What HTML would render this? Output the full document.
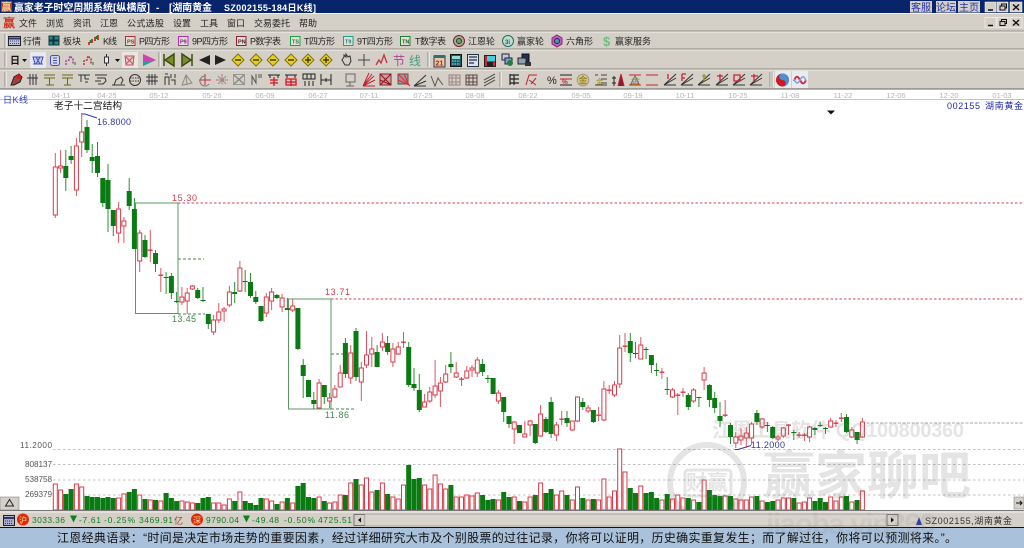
<!DOCTYPE html>
<html><head><meta charset="utf-8"><style>
html,body{margin:0;padding:0;width:1024px;height:548px;overflow:hidden;background:#fff}
svg{display:block;position:absolute;left:0;top:0}
text{font-family:"Liberation Sans","Noto Sans CJK SC",sans-serif}
.u text,.u{font-size:9px;fill:#222}
.ic{fill:none;stroke:#333;stroke-width:1}
</style></head><body>
<svg id="s" width="1024" height="548" viewBox="0 0 1024 548" xmlns="http://www.w3.org/2000/svg" style="filter:blur(.3px)">
<!-- chrome -->
<rect width="1024" height="13.5" fill="#08246b"/>
<rect y="13.5" width="1024" height="76" fill="#d4d0c8"/>
<path d="M0 13.5H1024M0 32H1024M0 50H1024M0 70H1024" stroke="#f4f2ec" stroke-width="1"/>
<path d="M0 31H1024M0 49H1024M0 69H1024" stroke="#8e8b84" stroke-width="1"/>
<path d="M0 89H1024" stroke="#666" stroke-width="1"/>
<path d="M0 99.5H1024" stroke="#c4c4c4" stroke-width="1"/>
<path d="M5 34V48M5 52V67M5 72V87" stroke="#8e8b84" stroke-width="1"/>
<path d="M6 34V48M6 52V67M6 72V87" stroke="#fff" stroke-width="1"/>
<path d="M428 52V67M500 72V87M770 72V87M772 72V87M159 52V67" stroke="#8e8b84"/>
<path d="M429 52V67M501 72V87M771 72V87M773 72V87M160 52V67" stroke="#fff"/>

<!-- title -->
<rect x="1" y="1" width="11" height="11" fill="#c83020"/><text x="1.5" y="10.5" font-size="10" fill="#f4e0a0" font-weight="700">赢</text>
<g fill="#fff" font-weight="700" font-size="10">
<text x="14" y="11" textLength="99">赢家老子时空周期系统</text>
<text x="113" y="11" textLength="37">[纵横版]</text>
<text x="156" y="11">-</text>
<text x="169" y="11" textLength="43">[湖南黄金</text>
<text x="224" y="11" textLength="92" font-size="9">SZ002155-184日K线]</text>
</g>
<g fill="#d4d0c8"><rect x="910" y="1" width="22" height="11.500"/><rect x="936" y="1" width="20" height="11.500"/><rect x="958" y="1" width="22" height="11.500"/></g>
<g fill="#2030b0" font-size="10"><text x="911" y="11">客服</text><text x="936" y="11">论坛</text><text x="959" y="11">主页</text></g>
<g fill="#d4d0c8" stroke="#fff" stroke-width=".5"><rect x="985" y="2" width="11" height="10"/><rect x="997" y="2" width="11" height="10"/><rect x="1010" y="2" width="12" height="10"/><rect x="985" y="17.500" width="11" height="10"/><rect x="997" y="17.500" width="11" height="10"/><rect x="1010" y="17.500" width="12" height="10"/></g>
<path d="M988 10H993M1013 4.500L1019 10M1019 4.500L1013 10M988 25.500H993M1013 20L1019 25.500M1019 20L1013 25.500" stroke="#111" stroke-width="1.400"/>
<path d="M1000 6h5v4h-5zM1001.500 6V4h5v4h-1.500M1000 21.500h5v4h-5zM1001.500 21.500v-2h5v4h-1.500" fill="none" stroke="#111"/>

<!-- menu -->
<rect x="3" y="16" width="12" height="13" fill="#d4d0c8"/><text x="3" y="27" font-size="12" fill="#d02818" font-weight="700">赢</text>
<g class="u" font-size="9" fill="#222">
<text x="19" y="26.500" textLength="18">文件</text><text x="46" y="26.500" textLength="18">浏览</text><text x="73" y="26.500" textLength="18">资讯</text><text x="100" y="26.500" textLength="18">江恩</text><text x="127" y="26.500" textLength="37">公式选股</text><text x="173" y="26.500" textLength="18">设置</text><text x="200" y="26.500" textLength="18">工具</text><text x="227" y="26.500" textLength="18">窗口</text><text x="254" y="26.500" textLength="36">交易委托</text><text x="299" y="26.500" textLength="18">帮助</text>
</g>
<!-- toolbar 1 -->
<g class="u">
<text x="23" y="44.500" textLength="18">行情</text><text x="63" y="44.500" textLength="18">板块</text><text x="103" y="44.500" textLength="14">K线</text>
<text x="139" y="44.500" textLength="31" font-size="8.500">P四方形</text><text x="192" y="44.500" textLength="36" font-size="8.500">9P四方形</text><text x="250" y="44.500" textLength="31" font-size="8.500">P数字表</text><text x="304" y="44.500" textLength="31" font-size="8.500">T四方形</text><text x="357" y="44.500" textLength="36" font-size="8.500">9T四方形</text><text x="415" y="44.500" textLength="31" font-size="8.500">T数字表</text>
<text x="468" y="44.500" textLength="27">江恩轮</text><text x="517" y="44.500" textLength="27">赢家轮</text><text x="566" y="44.500" textLength="27">六角形</text><text x="615" y="44.500" textLength="36">赢家服务</text>
</g>
<rect x="8.500" y="36.500" width="12" height="9" fill="#bcc4dc" stroke="#223"/><path d="M9 38.500H20" stroke="#336" stroke-width="2"/><path d="M10 41H19M10 43.500H19" stroke="#446" stroke-dasharray="1 1"/>
<path d="M49 36h4v4h-4zM54 36h5v4h-5zM49 41h4v4h-4zM54 41h5v4h-5z" fill="#2a8a78" stroke="#134"/>
<path d="M89 45V42M92 43V39M95 41V37M98 40V35" stroke="#c01010" stroke-width="1.500"/><path d="M90.500 43V40M96.500 39V36" stroke="#108010" stroke-width="1.500"/>
<g fill="#e4e0d8" stroke-width="1"><rect x="125.500" y="36.500" width="9.500" height="9" stroke="#b03030"/><rect x="178.500" y="36.500" width="9.500" height="9" stroke="#b030b0"/><rect x="236.500" y="36.500" width="9.500" height="9" stroke="#902030"/><rect x="290.500" y="36.500" width="9.500" height="9" stroke="#20a040"/><rect x="343.500" y="36.500" width="9.500" height="9" stroke="#20a090"/><rect x="400.500" y="36.500" width="9.500" height="9" stroke="#208030"/></g>
<g font-size="5.500" font-weight="700"><text x="127" y="43.500" fill="#803030">PS</text><text x="180" y="43.500" fill="#802080">P9</text><text x="238" y="43.500" fill="#502030">PN</text><text x="292" y="43.500" fill="#208040">TS</text><text x="345" y="43.500" fill="#208070">T9</text><text x="402" y="43.500" fill="#206030">TN</text></g>
<circle cx="459" cy="41" r="5.500" fill="#a0b090" stroke="#802030" stroke-width="1"/><circle cx="459" cy="41" r="2.500" fill="#70a070" stroke="#333"/>
<circle cx="508" cy="41" r="5.500" fill="#c0dcd0" stroke="#207060"/><text x="505" y="44" font-size="6" fill="#206050" font-weight="700">3i</text>
<path d="M557 35l5 3v6l-5 3-5-3v-6z" fill="#b060c0" stroke="#a02060"/><circle cx="557" cy="41" r="2.500" fill="#40a0a0" stroke="#226"/>
<text x="603" y="46" font-size="13" fill="#6cc080" font-weight="700">$</text>

<!-- toolbar 2 -->
<text x="10" y="64" font-size="10" font-weight="700" fill="#111">日</text><path d="M22 59h5l-2.500 3z" fill="#111"/>
<rect x="30" y="52" width="16" height="16" fill="#e8e8f0"/><rect x="122" y="52" width="16" height="16" fill="#e8e6e0"/>
<path d="M33 57h10l-2 7h-6zM33 64h10M36 57l4 7M40 57l-4 7" fill="#c0c8f0" stroke="#4050b8"/>
<rect x="50.500" y="55.500" width="9" height="10" rx="2" fill="#d8d8f0" stroke="#4050b8"/><path d="M53 58h4M53 60.500h4M53 63h4" stroke="#4050b8"/>
<path d="M66 65v-4l3-1 1-4 3 3v5" fill="none" stroke="#b040a0" stroke-width="1.500" stroke-dasharray="2 1"/><path d="M75 62v3" stroke="#208020"/>
<path d="M84 65v-4l3-1 1-4 3 3v5" fill="none" stroke="#c03040" stroke-width="1.500" stroke-dasharray="2 1"/><path d="M93 62v3" stroke="#208020"/>
<path d="M106.500 54v12" stroke="#333"/><rect x="104.500" y="57" width="4" height="6" fill="#eee" stroke="#333"/><path d="M115 59h5l-2.500 3z" fill="#111"/>
<path d="M125 56h9l-1 9h-7zM126 57l7 7M133 57l-7 7" fill="#f0c8c8" stroke="#c05060"/>
<path d="M143 54l13 6-13 6z" fill="#d040b0"/><path d="M143 61h10l3-1-13 6z" fill="#20a0a0"/>
<path d="M164 54v12M174 54l-9 6 9 6z" fill="#7c8c28" stroke="#3c4c10" stroke-width="1.500"/>
<path d="M192 54v12M182 54l9 6-9 6z" fill="#7c8c28" stroke="#3c4c10" stroke-width="1.500"/>
<path d="M199 60l11-5v10z" fill="#222"/><path d="M215 55l11 5-11 5z" fill="#222"/>
<g fill="#e8d020" stroke="#807010"><path d="M238 54l6 6-6 6-6-6z"/><path d="M256 54l6 6-6 6-6-6z"/><path d="M273 54l6 6-6 6-6-6z"/><path d="M291 54l6 6-6 6-6-6z"/><path d="M308 54l6 6-6 6-6-6z"/><path d="M326 54l6 6-6 6-6-6z"/></g>
<path d="M235 60h6M253 60h6M270 60h6M288 60h6M305 60h6M323 60h6M308 57v6M326 57v6" stroke="#222" stroke-width="1.200"/>
<path d="M342 60l2-3v-2l2 2v-3l2 3 2-1 1 5-2 4h-4z" class="ic"/>
<path d="M364 54v12M358 60h12" stroke="#444"/>
<path d="M376 65l3-5 2 3 3-8 3 8" fill="none" stroke="#c03040" stroke-width="1.300"/>
<text x="393" y="65" font-size="12" fill="#b040a0">节</text><text x="409" y="65" font-size="12" fill="#40a080">线</text>
<rect x="434" y="56" width="11" height="11" fill="#e8c8a0" stroke="#335"/><rect x="434" y="55" width="11" height="3" fill="#307070"/><text x="435.500" y="65.500" font-size="7" fill="#c02020" font-weight="700">21</text>
<rect x="450.500" y="54.500" width="11" height="12" fill="#106070" stroke="#111"/><rect x="452" y="56" width="8" height="3" fill="#90e0d0"/><path d="M452 61h8M452 64h8" stroke="#ccd" stroke-dasharray="1.500 1"/>
<rect x="467.500" y="54.500" width="11" height="12" fill="#dde" stroke="#234"/><path d="M469 57h8M469 60h8M469 63h5" stroke="#234" stroke-width="1.200"/>
<rect x="484.500" y="55.500" width="11" height="11" fill="#e02030" stroke="#222"/><rect x="487" y="56" width="8" height="5" fill="#40d0e0"/><rect x="487" y="62" width="6" height="4" fill="#222"/>
<rect x="502" y="54" width="7" height="6" fill="#c0c8e8" stroke="#223"/><rect x="505" y="58" width="7" height="6" fill="#80a0d0" stroke="#223"/><circle cx="510" cy="63" r="3" fill="#208040"/>
<rect x="522" y="54" width="7" height="8" fill="#203060" stroke="#111"/><rect x="518" y="58" width="8" height="6" fill="#90a0b0" stroke="#222"/><rect x="525" y="62" width="6" height="4" fill="#333"/>

<!-- toolbar 3 -->
<path d="M11 85l3-8 5-3 3 3-2 5-6 3z" fill="#a04040" stroke="#222"/><circle cx="19" cy="76.500" r="2.300" fill="#e01010"/>
<g fill="none" stroke="#333" stroke-width="1">
<path d="M30 74v11M33 74v11M27 78h11M36 74v11"/>
<path d="M146 77h12M149 74v11M152 74v11M155 74v11M146 81h12"/>
<path d="M44 75h11M44 78h11M49.500 78v7M46 85h8" stroke="#6a6a10"/><path d="M62 75h11M62 78h11M67.500 78v7M64 85h7" stroke="#6a6a10"/>
<path d="M78 75h12M81 75v7M85 75v4M85 79h4M85 82h3"/>
<path d="M95 75h12M97 78h8l1 3-3 3h-5M95 81h6"/>
<path d="M112 85h13M114 85l2-5 5-3 2 3-2 4"/>
<circle cx="135" cy="80" r="5.500"/><path d="M130 78h10M130 81h10" stroke-dasharray="1.500 1"/>
<path d="M165 85v-8h4v8M171 74v4M175 74v4M171 80h4v5M165 74h3"/>
<path d="M182 85l4-10 6 8-9 2zM186 75l1 10" stroke="#888"/>
<path d="M205 74v11M199 80h12" stroke="#c03040"/><path d="M205 76a5 5 0 1 0 4 8" stroke="#777"/>
<path d="M222 74v11M216 80h12" stroke="#c05060" stroke-dasharray="1.500 .7"/><path d="M218 76l8 8M226 76l-8 8" stroke="#909090"/>
<rect x="233.500" y="74.500" width="11" height="10" stroke="#999"/><path d="M234 75l10 9M244 75l-10 9" stroke="#888" stroke-width="1.500"/>
<path d="M252 85v-9l4 7v-9M259 74v4M261 74v4" stroke="#555"/>
<path d="M268 75h12M270 75v3M278 75v3" stroke="#222"/><path d="M274 77v9M270 80h8M270 83h8" stroke="#e01020" stroke-width="1.300"/>
<path d="M285 75h12M287 75v3M295 75v3" stroke="#222"/><path d="M286 79h10v6h-10zM291 79v7M286 82h10" stroke="#e01020" stroke-width="1.300"/>
<path d="M303 74h12v5h-12zM307 74v5M311 74v5M305 81v5M309 81v5M313 81v5" stroke="#222"/>
<path d="M321 74v11M331 74v11M321 80h10M326 78v4" stroke="#222"/>
<path d="M346 74h9v8h-9zM350 82v4M346 86h8" stroke="#666"/>
<path d="M363 86l11-10M363 86l9-12M363 86l6-13M363 86l12-6M363 86h12" stroke="#c02030"/>
<rect x="380" y="74" width="11" height="11" fill="#c8a0a0" stroke="#902030"/><path d="M380 85l11-11M380 74l11 11M380 80l11 5" stroke="#901020"/>
<rect x="398" y="74" width="10" height="10" fill="#b09090" stroke="#555"/><path d="M398 74l12 12M398 80l11 5M404 74l5 11" stroke="#d03040"/>
<path d="M414 86l12-11M414 86l12-5M414 86h12" stroke="#333"/>
<path d="M431 76l4 10 3-8 2 3 3 4" stroke="#555"/>
<path d="M449 75h11v10h-11zM452 75v10M456 75v10M449 78h11M449 82h11" stroke="#a08080"/>
<path d="M466 75h11v10h-11zM469 75v10M473 75v10M466 78h11M466 82h11" stroke="#604040"/>
<path d="M484 80l11-6M484 83l11-6M484 86l11-6" stroke="#555"/>
<path d="M510 74v11M510 75h9M510 79h9M510 83h9M514 75v10" stroke="#222" stroke-width="1.200"/>
<path d="M526 85l3-10h8M529 80l7 5M536 78l-5 6" stroke="#c02030"/>
<path d="M560 75h12M560 85h12" stroke="#222"/><path d="M560 79h12" stroke="#d02030"/>
<circle cx="583" cy="80" r="5.800" fill="#d8c888" stroke="#998"/>
<path d="M595 75h3M601 75h6M601 79h6M601 83h6M595 85h12" stroke="#444"/>
<path d="M614 76v10M612 78h4M612 83h4" stroke="#222"/><path d="M618 86l3-12 3 12" fill="#802030" stroke="#c02030"/>
<path d="M629 75h12M629 85h12" stroke="#d02030"/><path d="M635 76l-4 8h8z" stroke="#666"/>
<path d="M646 75h12M646 85h12" stroke="#d02030"/>
<path d="M664 85h12M664 85l12-7M664 85l12-11" stroke="#333"/><path d="M668 74v5" stroke="#d02030" stroke-width="1.300"/>
<path d="M681 85h12M681 85l12-7M681 85l12-11" stroke="#333"/><path d="M682 74h4M682 74v7M682 78h3" stroke="#d02030" stroke-width="1.300"/>
<path d="M698 85h12M698 85l12-7M698 85l12-11" stroke="#333"/><path d="M702 76h4M704 74v7" stroke="#a09020" stroke-width="1.300"/>
<path d="M716 85h12M716 85l12-7M716 85l12-11" stroke="#333"/><path d="M717 76h6M720 74v8" stroke="#d02030" stroke-width="1.300"/>
<path d="M733 85h12M733 85l12-7M733 85l12-11" stroke="#333"/><path d="M734 75h6v6h-6z" stroke="#d02030" stroke-width="1.300"/>
<path d="M750 85h12M750 85l12-7M750 85l12-11" stroke="#333"/><path d="M751 76h7M754 74v7" stroke="#d02030" stroke-width="1.300"/>
</g>
<text x="547" y="84" font-size="11" fill="#222">%</text><text x="562" y="84" font-size="6.500" fill="#d02030" font-weight="700">%</text>
<text x="578.500" y="83.500" font-size="9" fill="#807010">金</text><text x="596" y="84" font-size="7" fill="#a09020">金</text>
<text x="631" y="84" font-size="9" fill="#a09020">金</text>
<rect x="775" y="71" width="16" height="17" fill="#e8ecf0"/><rect x="792" y="71" width="16" height="17" fill="#e8ecf0"/>
<circle cx="782.500" cy="80" r="6.500" fill="#d01820"/><path d="M782.500 73.500a6.500 6.500 0 0 1 0 13a3.200 3.200 0 0 0 0-6.500a3.200 3.200 0 0 1 0-6.500" fill="#5090d0"/>
<path d="M794 81c2-6 4-5 6-1s4 5 6 0" fill="none" stroke="#d03040" stroke-width="2"/><path d="M794 79c2 5 4 5 6 1s4-5 6 1" fill="none" stroke="#80a0d8" stroke-width="1.500"/>

<!-- date axis -->
<g font-size="7.500" fill="#b4b4b4" text-anchor="middle"><text x="61" y="98">04-11</text><text x="107" y="98">04-25</text><text x="159" y="98">05-12</text><text x="212" y="98">05-26</text><text x="265" y="98">06-09</text><text x="318" y="98">06-27</text><text x="369" y="98">07-11</text><text x="423" y="98">07-25</text><text x="475" y="98">08-08</text><text x="528" y="98">08-22</text><text x="581" y="98">09-05</text><text x="633" y="98">09-19</text><text x="685" y="98">10-11</text><text x="738" y="98">10-25</text><text x="790" y="98">11-08</text><text x="843" y="98">11-22</text><text x="896" y="98">12-06</text><text x="949" y="98">12-20</text><text x="1002" y="98">01-03</text></g>
<text x="3" y="103" font-size="9" fill="#3040c0" textLength="25">日K线</text>
<text x="54" y="109" font-size="9.700" fill="#222" textLength="68">老子十二宫结构</text>
<text x="947" y="109" font-size="9" fill="#2028a8" textLength="33">002155</text><text x="985" y="109" font-size="9" fill="#2028a8" textLength="38">湖南黄金</text>
<path d="M827 110.500h8l-4 4z" fill="#111"/>

<!-- grid and studies -->
<path d="M53 449.500H1024M53 464.500H1024M53 480H1024M53 495H1024" stroke="#c0c0c0" stroke-dasharray="2.500 2.500"/>
<path d="M862 423H1024" stroke="#aaa" stroke-dasharray="3 1.500"/>
<g font-size="8.200" fill="#555"><text x="20" y="448" textLength="32">11.2000</text><text x="25" y="467" textLength="27">808137</text><text x="25" y="482" textLength="27">538758</text><text x="25" y="497" textLength="27">269379</text></g>
<path d="M178 203H1024M331 299H1024" stroke="#d84050" stroke-dasharray="2.500 2"/>
<g fill="none" stroke="#5a9a60" stroke-width="1"><rect x="135.500" y="203" width="42.500" height="110.500"/><rect x="288.500" y="299" width="42.500" height="110"/></g>
<path d="M178 259H204M178 314H205M331 354H345M331 409H355" stroke="#408848" stroke-dasharray="3 2"/>
<g font-size="9"><text x="172" y="201" fill="#c84050" textLength="25">15.30</text><text x="325" y="295" fill="#c84050" textLength="25">13.71</text><text x="172" y="322" fill="#408848" textLength="24">13.45</text><text x="325" y="418" fill="#408848" textLength="24">11.86</text>
<text x="97" y="125" fill="#3038a0" textLength="34">16.8000</text><text x="751" y="448" fill="#3038a0" textLength="34">11.2000</text></g>
<path d="M82 114H85L97 118M735 449.500H738L751 445.500" fill="none" stroke="#3038b0"/>
<g id="c"></g>

<!-- watermark -->
<g fill="#777" opacity=".2">
<text x="712" y="437" font-size="20" font-weight="700" textLength="252">江恩工具软件 QQ100800360</text>
<text x="763" y="494" font-size="52" font-weight="700" textLength="208">赢家聊吧</text>
<circle cx="707" cy="482" r="37" fill="none" stroke="#777" stroke-width="6"/>
<rect x="685" y="470" width="46" height="26" rx="3" fill="none" stroke="#777" stroke-width="3"/>
<text x="686" y="490" font-size="21" font-weight="700">财赢</text>
</g>

<!-- bottom controls -->
<rect x="0" y="497" width="19" height="13" fill="#d4d0c8" stroke="#777" stroke-width=".5"/><path d="M9.500 499.500l-4 6.500h8z" fill="none" stroke="#222"/>
<rect x="1014" y="497" width="10" height="12" fill="#d4d0c8" stroke="#777" stroke-width=".5"/><path d="M1016 503h6M1020 501l2 2-2 2" fill="none" stroke="#111"/>
<rect y="510" width="1024" height="17" fill="#d4d0c8"/><path d="M0 510.500H1024" stroke="#777"/><path d="M0 512H1024" stroke="#f2f0ea"/>
<path d="M0 527.500H1024" stroke="#111"/>
<rect y="528" width="1024" height="20" fill="#a9c1da"/>
<rect x="3.500" y="515.500" width="11" height="10" fill="#aab0cc" stroke="#222"/><path d="M4 518h10" stroke="#336" stroke-width="2"/><path d="M5 521h8M5 523.500h8" stroke="#334" stroke-dasharray="1 1"/>
<circle cx="23" cy="519.500" r="6" fill="#e02810"/><text x="19" y="523" font-size="8" fill="#f8e080">沪</text>
<circle cx="197" cy="519.500" r="6" fill="#e02810"/><text x="193" y="523" font-size="8" fill="#f8e080">深</text>
<g font-size="8.500" fill="#108020">
<text x="32" y="523" textLength="33">3033.36</text><text x="79" y="523" textLength="22">-7.61</text><text x="104" y="523" textLength="31">-0.25%</text><text x="139" y="523" textLength="34">3469.91</text>
<text x="206" y="523" textLength="33">9790.04</text><text x="252" y="523" textLength="27">-49.48</text><text x="284" y="523" textLength="31">-0.50%</text><text x="318" y="523" textLength="34">4725.51</text></g>
<path d="M70 515.500h7l-3.500 7zM243 515.500h7l-3.500 7z" fill="#108020"/>
<text x="174" y="524" font-size="9" fill="#a04030">亿</text>
<rect x="354" y="514" width="534" height="12" fill="#eceae4" stroke="#999" stroke-width=".5"/>
<rect x="354" y="514.500" width="11" height="11" fill="#d4d0c8" stroke="#555" stroke-width=".7"/><rect x="365" y="514.500" width="521" height="11" fill="#d8d4cc" stroke="#aaa" stroke-width=".5"/><rect x="887" y="514.500" width="11" height="11" fill="#d4d0c8" stroke="#555" stroke-width=".7"/>
<path d="M361 517.500v5l-3-2.500zM891 517.500v5l3-2.500z" fill="#111"/>
<path d="M916 525l3-8 3 8z" fill="#3040a0"/>
<text x="925" y="524" font-size="9" fill="#333" textLength="87">SZ002155,湖南黄金</text>
<text x="766" y="534" font-size="30" font-weight="700" fill="#777" opacity=".1" textLength="170">jiaoba.vip360</text>
<text x="57" y="542" font-size="12" fill="#111" textLength="900">江恩经典语录：“时间是决定市场走势的重要因素，经过详细研究大市及个别股票的过往记录，你将可以证明，历史确实重复发生；而了解过往，你将可以预测将来。”。</text>
</svg>
<script>
var K=[[1,153,167,215,218],[1,150,166,168,173],[0,150,166,178,191],[0,146,156,160,164],[1,138,146,190,196],[1,113,132,142,157],[0,120,127,150,153],[0,144,157,161,173],[0,142,156,173,177],[0,178,178,203,207],[0,164,180,209,232],[0,210,210,226,236],[1,202,209,233,243],[1,217,221,226,243],[0,178,191,206,210],[0,198,209,249,249],[1,230,233,261,272],[0,235,240,257,258],[1,230,250,251,262],[0,250,253,264,272],[1,268,275,276,292],[0,272,277,278,294],[0,273,276,293,299],[0,292,301,302,303],[1,287,297,302,305],[1,288,293,301,314],[1,285,286,289,290],[0,288,290,298,299],[0,287,300,301,302],[0,314,314,324,329],[1,315,320,332,335],[1,303,312,320,323],[1,307,309,311,322],[1,286,292,305,307],[0,282,292,294,303],[1,261,268,291,292],[0,270,281,282,292],[0,273,282,296,298],[0,291,297,302,304],[0,306,306,321,322],[1,293,297,313,317],[1,288,292,301,310],[0,294,295,298,299],[1,294,298,307,312],[0,298,308,310,310],[1,299,306,310,312],[0,308,308,349,350],[0,359,365,376,398],[0,380,380,397,397],[0,392,400,404,409],[1,379,383,408,409],[0,385,385,397,404],[1,393,398,401,408],[1,385,389,397,398],[1,365,373,387,387],[0,338,343,374,378],[1,345,353,378,384],[0,328,331,377,381],[1,362,368,382,401],[1,331,355,365,368],[1,337,349,354,367],[0,345,352,367,367],[1,333,342,347,351],[0,336,343,352,355],[1,343,349,362,367],[1,342,347,354,355],[1,332,342,342,348],[0,342,347,385,387],[0,368,384,388,391],[0,374,390,410,412],[1,394,402,407,407],[1,387,392,401,403],[1,360,386,395,398],[1,377,383,391,407],[1,365,374,382,383],[0,352,364,367,373],[1,362,373,377,378],[1,377,379,380,386],[1,366,371,378,379],[1,365,368,370,377],[1,357,360,373,377],[0,359,364,372,376],[0,375,378,378,383],[0,378,378,394,394],[1,390,393,401,404],[0,397,397,412,422],[0,416,416,424,428],[1,421,422,429,444],[0,425,425,433,433],[1,421,434,437,437],[1,420,421,425,436],[0,424,424,443,444],[1,405,414,436,437],[0,417,419,432,433],[0,397,402,434,438],[1,422,425,435,441],[1,411,419,420,425],[0,411,418,423,427],[1,421,421,430,431],[1,397,397,421,422],[0,398,402,407,410],[1,405,408,411,413],[0,410,410,422,423],[1,407,415,416,421],[1,381,389,420,421],[1,385,390,391,394],[1,381,385,395,397],[1,335,348,384,388],[1,333,346,347,352],[0,333,341,353,362],[0,342,353,354,358],[1,337,345,359,359],[0,347,349,350,359],[0,355,355,365,373],[0,363,370,371,376],[1,368,372,373,379],[0,377,389,390,395],[1,388,390,397,398],[1,393,395,396,415],[1,388,392,393,397],[0,393,395,407,410],[1,388,390,401,403],[0,397,397,398,407],[1,367,373,380,390],[0,384,385,400,407],[0,392,398,408,413],[0,402,416,421,427],[1,400,415,416,417],[0,423,425,437,444],[1,432,437,443,448],[1,428,436,440,445],[1,427,433,438,448],[1,422,424,438,445],[0,410,413,422,425],[1,418,419,427,429],[0,422,425,426,432],[0,426,427,438,439],[1,435,437,439,441],[1,427,428,436,438],[1,424,425,426,435],[0,430,432,432,440],[1,432,435,436,438],[1,433,435,435,441],[1,426,427,437,442],[0,427,428,430,435],[0,422,425,425,427],[0,427,428,429,434],[1,418,421,427,428],[1,420,423,424,427],[1,413,418,419,422],[0,414,417,432,433],[1,427,430,437,438],[0,432,432,440,444],[1,418,422,437,438]];
var V=[484,490,494,489,484,487,496,497,497,498,497,498,498,494,492,489,495,499,500,500,501,493,498,501,501,502,503,503,498,497,503,503,505,499,501,492,501,503,505,498,499,501,504,502,498,503,486,483,497,498,497,501,503,502,495,495,483,479,485,478,492,490,483,494,497,499,485,465,479,478,485,489,475,484,489,485,497,497,495,496,493,495,500,499,500,492,497,497,501,502,497,495,483,493,489,495,491,495,500,487,498,500,499,500,479,497,491,449,472,488,493,486,493,492,498,500,494,499,495,498,498,500,502,480,490,495,496,496,496,499,500,500,497,496,501,502,501,500,498,498,498,503,502,498,501,498,502,497,501,497,496,502,500,491];
var R='#d83a48',G='#0a7a12',h='';
K.forEach(function(k,i){var x=55.3+5.275*i,c=k[0]?R:G,v=V[i];
h+='<path d="M'+x.toFixed(1)+' '+k[1]+'V'+k[4]+'" stroke="'+c+'" stroke-width="1" opacity=".85"/>';
var H=Math.max(k[3]-k[2],1);
if(k[0])h+=H>1?'<rect x="'+(x-2).toFixed(1)+'" y="'+k[2]+'" width="4" height="'+H+'" fill="#fff" stroke="'+c+'"/>':'<rect x="'+(x-2.4).toFixed(1)+'" y="'+(k[2]-.5)+'" width="4.8" height="1.4" fill="'+c+'"/>';
else h+='<rect x="'+(x-2.5).toFixed(1)+'" y="'+k[2]+'" width="5" height="'+H+'" fill="'+c+'"/>';
if(k[0])h+='<rect x="'+(x-2).toFixed(1)+'" y="'+v+'" width="4" height="'+(510-v)+'" fill="#fff" stroke="'+c+'"/>';
else h+='<rect x="'+(x-2.5).toFixed(1)+'" y="'+v+'" width="5" height="'+(510-v)+'" fill="'+c+'"/>';
});
document.getElementById('c').innerHTML=h;
</script>
</body></html>
